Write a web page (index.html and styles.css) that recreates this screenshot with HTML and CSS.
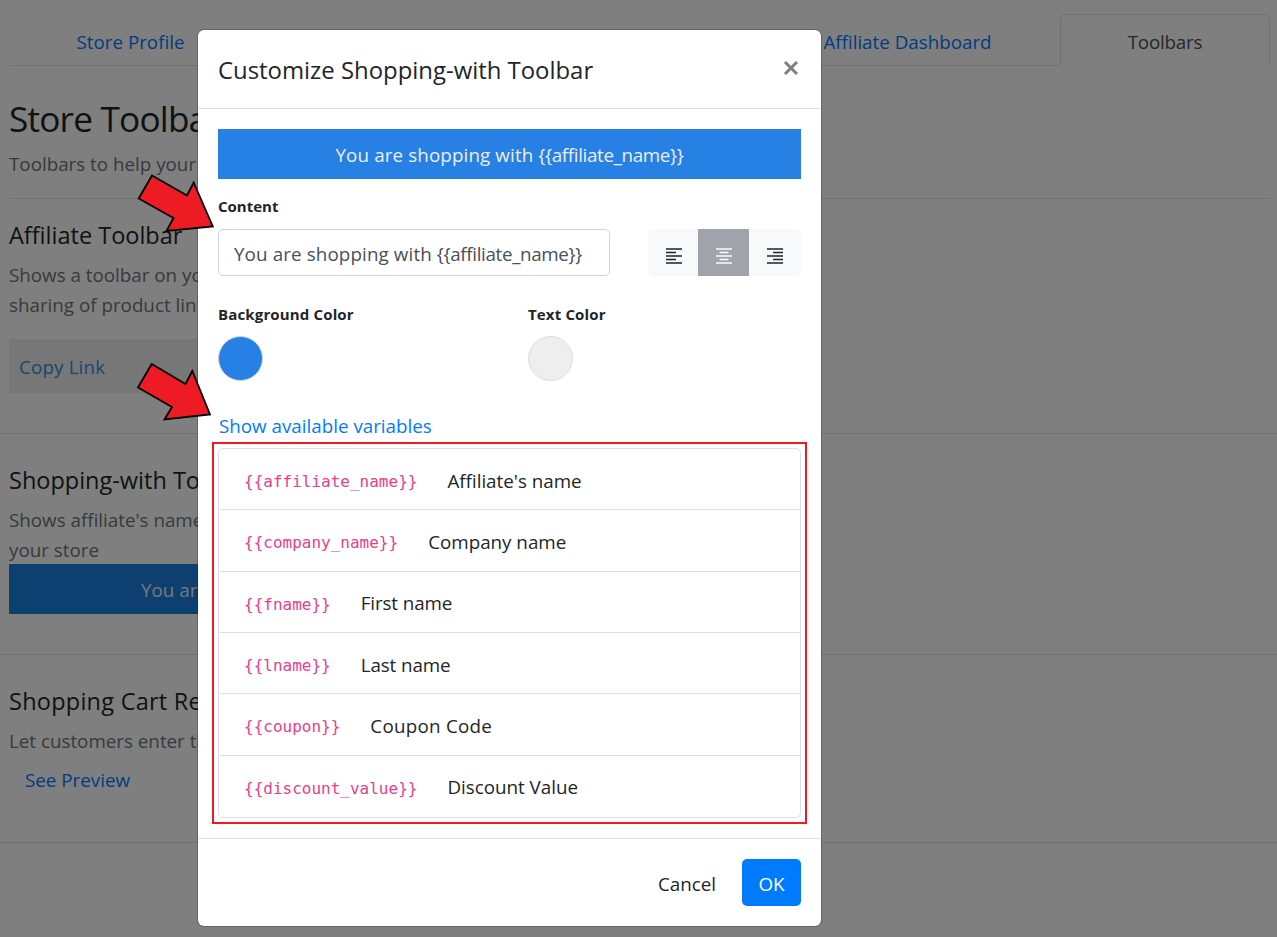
FILE: index.html
```
<!DOCTYPE html>
<html lang="en">
<head>
<meta charset="utf-8">
<title>Store Toolbars</title>
<link rel="stylesheet" href="styles.css">
</head>
<body>
<main class="page">
  <nav class="tabs">
    <a class="tab tab-profile">Store Profile</a>
    <span class="tab-gap"></span>
    <a class="tab tab-dashboard">Affiliate Dashboard</a>
    <a class="tab tab-active">Toolbars</a>
  </nav>
  <header class="intro">
    <h1>Store Toolbars</h1>
    <p>Toolbars to help your</p>
  </header>
  <section class="block block-affiliate">
    <h2>Affiliate Toolbar</h2>
    <p>Shows a toolbar on your<br>sharing of product links</p>
    <div class="copy"><a>Copy Link</a></div>
  </section>
  <section class="block block-shopping">
    <h2>Shopping-with Toolbar</h2>
    <p>Shows affiliate's name on<br>your store</p>
    <div class="bar bar-page">You are</div>
  </section>
  <section class="block block-cart">
    <h2 class="wide">Shopping Cart Referral</h2>
    <p>Let customers enter their</p>
    <a class="preview">See Preview</a>
  </section>
</main>

<div class="backdrop">
  <div class="modal">
    <header class="modal-header">
      <h2 class="modal-title">Customize Shopping-with Toolbar</h2>
      <svg class="close" width="16" height="16" viewBox="0 0 16 16"><path d="M2 2 14 14M14 2 2 14"/></svg>
    </header>
    <div class="modal-body">
      <div class="bar"><span class="words">You are shopping with </span><span class="token">{{affiliate_name}}</span></div>
      <label class="label label-content">Content</label>
      <div class="row">
        <div class="input"><span class="words">You are shopping with </span><span class="token">{{affiliate_name}}</span></div>
        <div class="group">
          <span class="seg"><svg width="16" height="16" viewBox="0 0 16 16"><path d="M0 1h16M0 4.5h10M0 8h16M0 11.5h10M0 15h16"/></svg></span>
          <span class="seg seg-on"><svg width="16" height="16" viewBox="0 0 16 16"><path d="M0 1h16M3.5 4.5h9M0 8h16M3.5 11.5h9M0 15h16"/></svg></span>
          <span class="seg"><svg width="16" height="16" viewBox="0 0 16 16"><path d="M0 1h16M6 4.5h10M0 8h16M6 11.5h10M0 15h16"/></svg></span>
        </div>
      </div>
      <div class="colors">
        <div class="color-field"><label class="label">Background Color</label><span class="swatch swatch-blue"></span></div>
        <div class="color-field"><label class="label">Text Color</label><span class="swatch swatch-grey"></span></div>
      </div>
      <a class="show">Show available variables</a>
      <div class="highlight">
        <ul class="vars">
          <li><code>{{affiliate_name}}</code><span>Affiliate's name</span></li>
          <li><code>{{company_name}}</code><span>Company name</span></li>
          <li><code>{{fname}}</code><span class="tight">First name</span></li>
          <li><code>{{lname}}</code><span class="tight">Last name</span></li>
          <li><code>{{coupon}}</code><span class="wide">Coupon Code</span></li>
          <li><code>{{discount_value}}</code><span>Discount Value</span></li>
        </ul>
      </div>
    </div>
    <footer class="modal-footer">
      <span class="btn-cancel">Cancel</span>
      <span class="btn-ok">OK</span>
    </footer>
  </div>
</div>
<svg class="arrows" width="240" height="440" viewBox="0 0 240 440">
  <path d="M152 175.5 187 195.5 193.7 182.5 212.8 226.5 166.5 231 173.5 218 138.7 198.5Z"/>
  <path d="M151.7 364 185.5 384 192.3 371 210 414.5 164.5 419.5 172 407 138 387.5Z"/>
</svg>
</body>
</html>
```

FILE: styles.css
```
* { box-sizing: border-box; }
html, body { height: 937px; overflow: hidden; }
body {
  margin: 0;
  position: relative;
  background: #fff;
  color: #212529;
  font: 18.8px/30px "Open Sans", "Noto Sans", sans-serif;
  white-space: nowrap;
}
h1, h2, p, ul { margin: 0; padding: 0; font-weight: 400; }
a { color: #007bff; }

/* Page behind the dialog */
.page { padding-top: 14px; }
.tabs { display: flex; height: 52px; margin: 0 7px 0 9px; }
.tab { display: flex; justify-content: center; align-items: center; border-bottom: 1px solid #dee2e6; padding-top: 4px; }
.tab-profile { width: 243px; }
.tab-gap { flex: 1; border-bottom: 1px solid #dee2e6; }
.tab-dashboard { width: 305px; }
.tab-active { width: 210px; padding-top: 2px; color: #495057; letter-spacing: -.2px; border: 1px solid #dee2e6; border-bottom: 0; border-radius: 5px 5px 0 0; }
.intro { margin: 0 7px 0 9px; height: 133px; padding-top: 31px; border-bottom: 1px solid #dee2e6; }
.intro h1 { font-size: 35.2px; line-height: 42px; letter-spacing: -.8px; }
.intro p { margin-top: 10px; }
p { color: #6c757d; }
.block { padding-left: 9px; border-bottom: 1px solid #dee2e6; }
.block h2 { font-size: 23.5px; line-height: 30px; margin-bottom: 10px; }
.block-affiliate { height: 235px; padding-top: 21px; }
.block-shopping { height: 221px; padding-top: 31px; }
.block-cart { height: 188px; padding-top: 31px; }
.copy { width: 614px; height: 54px; margin-top: 19px; padding: 13px 10px; background: #efefef; }
.copy a { color: #2f8fdc; letter-spacing: .15px; }
.preview { display: block; margin: 9px 0 0 16px; }
.bar { height: 50px; padding-top: 11px; background: #2780e3; color: #eee; text-align: center; }
.bar-page { width: 614px; margin-top: -1px; padding-left: 132px; background: #1b80e0; text-align: left; }
.words { letter-spacing: .12px; white-space: pre; }
.token { letter-spacing: -.34px; }
.wide { letter-spacing: .25px; }
.tight { letter-spacing: -.1px; }

/* Dialog */
.backdrop { position: absolute; inset: 0; padding: 30px 0 0 198px; background: rgba(0,0,0,.5); }
.modal { width: 623px; height: 896px; background: #fff; border-radius: 6px; box-shadow: 0 0 0 1px rgba(0,0,0,.2); }
.modal-header { display: flex; justify-content: space-between; height: 79px; padding: 25px 22px 0 20px; border-bottom: 1px solid #dee2e6; }
.modal-title { font-size: 23.9px; line-height: 30px; }
.close { margin-top: 5px; stroke: #7f7f7f; stroke-width: 3; }
.modal-body { height: 729px; padding: 20px 20px 0; }
.label { display: block; font-size: 15px; font-weight: 700; line-height: 24px; letter-spacing: .15px; }
.label-content { margin: 15px 0 11px; letter-spacing: 0; }
.row { display: flex; justify-content: space-between; }
.input { width: 392px; height: 47px; padding: 9px 15px; border: 1px solid #ced4da; border-radius: 5px; color: #495057; }
.group { display: grid; grid-template-columns: 50px 51px 52px; width: 153px; height: 47px; border-radius: 5px; overflow: hidden; background: #f8f9fa; }
.seg { display: flex; justify-content: center; align-items: center; padding: 7px 0 0 1px; }
.seg-on { padding-left: 0; }
.seg:last-child { padding-left: 0; }
.seg svg { stroke: #212529; stroke-width: 1.7; }
.seg-on { background: #a0a4aa; }
.seg-on svg { stroke: #f8f9fa; }
.colors { display: grid; grid-template-columns: 310px 1fr; margin-top: 26px; }
.swatch { display: block; width: 45px; height: 45px; margin-top: 10px; border-radius: 50%; border: 1px solid #ced4da; }
.swatch-blue { background: #2780e3; }
.swatch-grey { background: #eee; border-color: #ddd; }
.show { display: block; margin: 30px 0 0 1px; }
.highlight { width: 595px; height: 382px; margin: 1px 0 0 -6px; padding: 4px; border: 2px solid #ed1c24; }
.vars { height: 370px; width: 583px; display: grid; grid-template-rows: repeat(6, 1fr); border: 1px solid #dfdfdf; border-radius: 5px; list-style: none; }
.vars li { display: flex; align-items: center; gap: 30px; padding: 3px 0 0 25px; border-bottom: 1px solid #dfdfdf; }
.vars li:last-child { border-bottom: 0; padding-top: 2px; }
code { padding-top: 3px; font: 16px/30px "DejaVu Sans Mono", monospace; color: #e83e8c; }
.modal-footer { display: flex; justify-content: flex-end; align-items: flex-start; height: 88px; padding: 20px; border-top: 1px solid #dee2e6; }
.btn-cancel { padding-top: 10px; margin-right: 26px; }
.btn-ok { width: 59px; height: 47px; padding-top: 10px; border-radius: 5px; background: #007bff; color: #fff; text-align: center; }

/* Annotation arrows */
.arrows { position: absolute; left: 0; top: 0; fill: #ed1c24; stroke: #000; stroke-width: 1.8; }
```
